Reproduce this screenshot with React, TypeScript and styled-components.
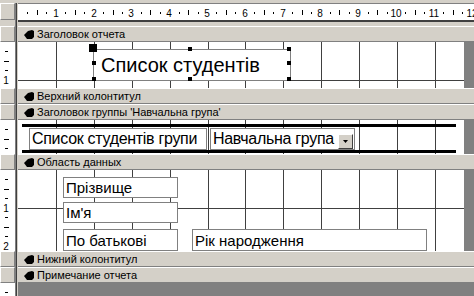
import React from 'react';
import styled, { createGlobalStyle } from 'styled-components';

const CM = 37.8;
const REPORT_WIDTH = 446;

const GlobalStyle = createGlobalStyle`
  html, body {
    margin: 0;
    padding: 0;
  }
  body {
    background: #808080;
    font-family: "Liberation Sans", Arial, sans-serif;
    overflow: hidden;
  }
`;

const Window = styled.div`
  width: 474px;
  height: 296px;
  display: flex;
  flex-direction: column;
  background: #d4d0c8;
  overflow: hidden;
`;

const TopStrip = styled.div`
  height: 3px;
  flex: none;
  background: #d4d0c8;
`;

const Row = styled.div<{ $h?: number }>`
  display: grid;
  grid-template-columns: 15px 3px 1fr;
  height: ${p => (p.$h ? `${p.$h}px` : 'auto')};
  flex: ${p => (p.$h ? 'none' : '1')};
  min-height: 0;
`;

const Splitter = styled.div`
  background: linear-gradient(to right, #808080 0 1px, #404040 1px 2px, #d4d0c8 2px 3px);
`;

const RaisedBox = styled.div`
  box-sizing: border-box;
  background: #d4d0c8;
  border-top: 1px solid #ffffff;
  border-left: 1px solid #ffffff;
  border-right: 1px solid #808080;
  border-bottom: 1px solid #808080;
`;

const HRuler = styled.div`
  background: #ffffff;
  border-top: 1px solid #808080;
  box-sizing: border-box;
  overflow: hidden;
`;

const RulerGap = styled.div`
  border-top: 2px solid #404040;
`;

const VRuler = styled.div`
  background: #ffffff;
  overflow: hidden;
`;

const BandBar = styled.div`
  box-sizing: border-box;
  display: flex;
  align-items: center;
  gap: 3px;
  padding-left: 6px;
  background: #d4d0c8;
  border-top: 1px solid #ffffff;
  border-bottom: 1px solid #808080;
  font-size: 11px;
  color: #000000;
  white-space: nowrap;
`;

const Canvas = styled.div`
  background: #808080;
  overflow: hidden;
`;

const Surface = styled.div`
  position: relative;
  width: ${REPORT_WIDTH}px;
  height: 100%;
  background: #ffffff;
  overflow: hidden;
`;

const GridSvg = styled.svg`
  position: absolute;
  left: 0;
  top: 0;
`;

const Field = styled.div<{ $size?: number }>`
  position: absolute;
  box-sizing: border-box;
  display: flex;
  align-items: center;
  padding-left: 2px;
  background: #ffffff;
  border: 1px solid #808080;
  font-size: ${p => p.$size ?? 15}px;
  color: #000000;
  white-space: nowrap;
  overflow: hidden;
`;

const TitleField = styled(Field)`
  padding-left: 7px;
  overflow: visible;
`;

const Handle = styled.div<{ $big?: boolean }>`
  position: absolute;
  width: ${p => (p.$big ? 8 : 4)}px;
  height: ${p => (p.$big ? 8 : 4)}px;
  background: #000000;
`;

const ThickLine = styled.div`
  position: absolute;
  height: 3px;
  background: #000000;
`;

const DropButton = styled.div`
  position: absolute;
  right: 1px;
  bottom: 0;
  width: 15px;
  height: 15px;
  box-sizing: border-box;
  display: flex;
  align-items: center;
  justify-content: center;
  background: #d4d0c8;
  border-top: 1px solid #ffffff;
  border-left: 1px solid #ffffff;
  border-right: 1px solid #404040;
  border-bottom: 1px solid #404040;
`;

const HorizontalRuler: React.FC = () => {
  const marks: React.ReactNode[] = [];
  for (let k = 1; k * CM / 4 < 460; k++) {
    const x = Math.round(k * CM / 4);
    if (k % 4 === 0) {
      marks.push(
        <text key={k} x={x} y={13} textAnchor="middle" fontSize="10" fill="#000">
          {k / 4}
        </text>
      );
    } else if (k % 2 === 0) {
      marks.push(<rect key={k} x={x} y={6} width={1} height={5} fill="#000" />);
    } else {
      marks.push(<rect key={k} x={x} y={8} width={1} height={2} fill="#000" />);
    }
  }
  return (
    <svg width="456" height="16" style={{ display: 'block', fontFamily: '"Liberation Sans", Arial, sans-serif' }}>
      {marks}
    </svg>
  );
};

const VerticalMarks: React.FC<{ h: number }> = ({ h }) => {
  const marks: React.ReactNode[] = [];
  for (let k = 1; k * CM / 4 < h + 6; k++) {
    const y = Math.round(k * CM / 4);
    if (k % 4 === 0) {
      if (y < h - 2) {
        marks.push(
          <text key={k} x={6} y={y + 4} textAnchor="middle" fontSize="10" fill="#000">
            {k / 4}
          </text>
        );
      }
    } else if (k % 2 === 0) {
      marks.push(<rect key={k} x={4} y={y} width={5} height={1} fill="#000" />);
    } else {
      marks.push(<rect key={k} x={5} y={y} width={3} height={1} fill="#000" />);
    }
  }
  return (
    <svg width="15" height={h} style={{ display: 'block', fontFamily: '"Liberation Sans", Arial, sans-serif' }}>
      {marks}
    </svg>
  );
};

const Grid: React.FC<{ h: number }> = ({ h }) => {
  const lines: React.ReactNode[] = [];
  for (let n = 1; n * 37.9 < REPORT_WIDTH; n++) {
    const x = Math.round(n * 37.9) + 0.5;
    lines.push(<line key={`v${n}`} x1={x} y1={0} x2={x} y2={h} stroke="#404040" />);
  }
  for (let m = 1; m * CM < h - 8; m++) {
    const y = Math.round(m * CM) + 0.5;
    lines.push(<line key={`h${m}`} x1={0} y1={y} x2={REPORT_WIDTH} y2={y} stroke="#404040" />);
  }
  return (
    <GridSvg width={REPORT_WIDTH} height={h}>
      {lines}
    </GridSvg>
  );
};

const SectionIcon: React.FC = () => (
  <svg width="10" height="9" viewBox="0 0 10 9" style={{ flex: 'none' }}>
    <path d="M0 5 L4 1 L8 0 L10 1 L10 7 L8 9 L3 9 Z" fill="#000" />
  </svg>
);

const Band: React.FC<{ title: string }> = ({ title }) => (
  <Row $h={16}>
    <RaisedBox />
    <Splitter />
    <BandBar>
      <SectionIcon />
      <span>{title}</span>
    </BandBar>
  </Row>
);

const Section: React.FC<{ h: number; children?: React.ReactNode }> = ({ h, children }) => (
  <Row $h={h}>
    <VRuler>
      <VerticalMarks h={h} />
    </VRuler>
    <Splitter />
    <Canvas>
      <Surface>
        <Grid h={h} />
        {children}
      </Surface>
    </Canvas>
  </Row>
);

const App: React.FC = () => {
  return (
    <>
      <GlobalStyle />
      <Window>
        <TopStrip />
        <Row $h={17}>
          <RaisedBox />
          <Splitter />
          <HRuler>
            <HorizontalRuler />
          </HRuler>
        </Row>
        <Row $h={6}>
          <div />
          <Splitter />
          <RulerGap />
        </Row>

        <Band title="Заголовок отчета" />
        <Section h={46}>
          <TitleField $size={20} style={{ left: 75, top: 7, width: 198, height: 32 }}>
            Список студентів
          </TitleField>
          <Handle $big style={{ left: 71, top: 2 }} />
          <Handle style={{ left: 170, top: 5 }} />
          <Handle style={{ left: 269, top: 5 }} />
          <Handle style={{ left: 74, top: 19 }} />
          <Handle style={{ left: 269, top: 19 }} />
          <Handle style={{ left: 74, top: 35 }} />
          <Handle style={{ left: 170, top: 35 }} />
          <Handle style={{ left: 269, top: 35 }} />
        </Section>

        <Band title="Верхний колонтитул" />
        <Band title="Заголовок группы 'Навчальна група'" />
        <Section h={34}>
          <ThickLine style={{ left: 4, top: 4, width: 434 }} />
          <Field $size={16} style={{ left: 11, top: 8, width: 178, height: 22, letterSpacing: '-0.3px' }}>
            Список студентів групи
          </Field>
          <Field $size={16} style={{ left: 192, top: 8, width: 145, height: 22, letterSpacing: '-0.3px' }}>
            Навчальна група
            <DropButton>
              <svg width="5" height="3" viewBox="0 0 5 3">
                <path d="M0 0 H5 L2.5 3 Z" fill="#000" />
              </svg>
            </DropButton>
          </Field>
          <ThickLine style={{ left: 4, top: 30, width: 434 }} />
        </Section>

        <Band title="Область данных" />
        <Section h={81}>
          <Field style={{ left: 45, top: 7, width: 115, height: 21 }}>Прізвище</Field>
          <Field style={{ left: 45, top: 32, width: 115, height: 21 }}>Ім'я</Field>
          <Field style={{ left: 45, top: 59, width: 115, height: 22 }}>По батькові</Field>
          <Field style={{ left: 174, top: 59, width: 235, height: 22 }}>Рік народження</Field>
        </Section>

        <Band title="Нижний колонтитул" />
        <Band title="Примечание отчета" />
        <Row>
          <VRuler>
            <VerticalMarks h={13} />
          </VRuler>
          <Splitter />
          <Canvas />
        </Row>
      </Window>
    </>
  );
};

export default App;
